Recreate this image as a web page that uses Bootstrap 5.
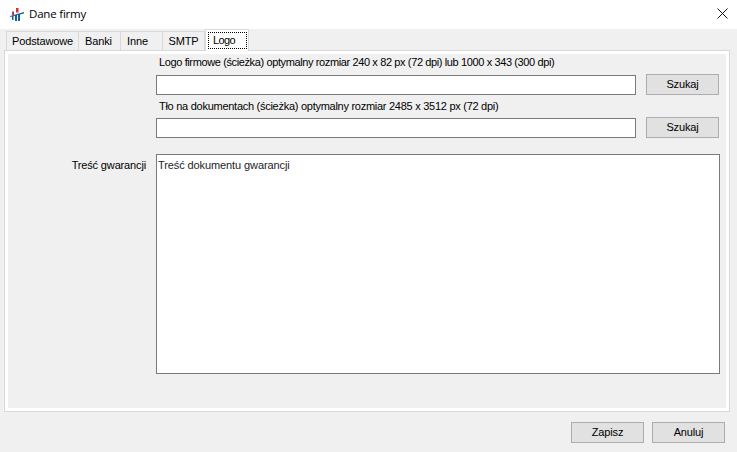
<!DOCTYPE html>
<html lang="pl">
<head>
<meta charset="utf-8">
<title>Dane firmy</title>
<link rel="stylesheet" href="https://cdn.jsdelivr.net/npm/bootstrap@5.3.0/dist/css/bootstrap.min.css">
<style>
html,body{height:452px;overflow:hidden}
body{background:#f0f0f0;color:#000;font-family:"Liberation Sans",Arial,sans-serif;font-size:11px;line-height:16px;letter-spacing:-.15px}
.title-strip{height:29px;background:#fff;padding:0 9px 0 10px}
.title-strip .app-title{font-family:"Open Sans",sans-serif;font-size:11.5px;margin-left:5px;letter-spacing:-.2px;margin-bottom:1px}
.close-x{width:11px;height:11px;margin-bottom:2px}
.tab-zone{padding:0 7px 0 4px;height:383px}
.nav.win-tabs{border:0;padding-left:2px;height:22px;align-items:flex-end;position:relative;z-index:1}
.win-tabs .nav-link{height:19px;margin:0 0 1px -1px;padding:0;color:#000;background:#f0f0f0;border:1px solid #d9d9d9;border-bottom:0;border-radius:0;text-align:center;line-height:18px}
.win-tabs .tab-a{width:73px;margin-left:0}
.win-tabs .tab-b{width:43px}
.win-tabs .tab-banki{padding-right:2px}
.win-tabs .tab-inne{padding-right:8px}
.win-tabs .nav-link.active{height:22px;width:44px;margin:0;background:#fff;color:#000;border-color:#d9d9d9;padding:2px 1px 0 2px;line-height:15px}
.dot-focus{display:block;border:1px dotted #000;height:17px;line-height:14px;text-align:left;padding-left:4px;letter-spacing:-.6px}
.tab-sheet{height:362px;border:1px solid #d9d9d9;background:#f0f0f0;box-shadow:inset 0 0 0 3px #fff;padding:3px 9px 0 3px;margin-top:-1px}
.form-area{display:grid;grid-template-columns:148px 1fr}
.hint-line{grid-column:2;height:20px;padding:0 0 0 3px;white-space:nowrap;letter-spacing:-.38px}
.hint-second{height:22px;padding-top:3px;letter-spacing:-.27px}
.path-row{grid-column:2;display:flex;gap:10px;align-items:flex-start}
.form-control.win-input{flex:none;width:480px;height:20px;margin-top:1px;padding:0 2px;border:1px solid #7a7a7a;border-radius:0;background:#fff;font-size:11px;box-shadow:none}
.btn.win-btn{flex:none;width:73px;height:21px;padding:0;background:#e1e1e1;border:1px solid #adadad;border-radius:0;color:#000;font-size:11px;line-height:19px;letter-spacing:-.15px}
.guarantee-row{grid-column:1 / 3;display:flex;margin-top:16px}
.guarantee-label{width:138px;text-align:right;padding-top:3px;white-space:nowrap}
.form-control.win-area{flex:none;margin-left:10px;width:564px;height:220px;padding:2px 2px 2px 1px;border:1px solid #7a7a7a;border-radius:0;background:#fff;font-size:11px;line-height:16px;resize:none;box-shadow:none;letter-spacing:-.1px}
.foot-bar{padding:10px 12px 0 0;gap:8px}
</style>
</head>
<body>
<div class="title-strip d-flex align-items-center justify-content-between">
  <div class="d-flex align-items-center">
    <svg width="14" height="13" viewBox="0 0 14 13" aria-hidden="true">
      <g fill="#d0313c"><rect x="2" y="3.500" width="2" height="3.500"/><rect x="6" y="0" width="2.500" height="4.500"/></g>
      <g fill="#15609f"><rect x="2" y="8" width="1.500" height="4"/><rect x="5" y="7" width="2" height="6"/><rect x="8" y="6" width="2" height="7"/><path d="M0 8 L14 4 V5.500 L0 9Z"/></g>
    </svg>
    <span class="app-title">Dane firmy</span>
  </div>
  <svg class="close-x" viewBox="0 0 11 11" aria-label="Zamknij"><path d="M.5.5l10 10M10.5.5l-10 10" stroke="#111" stroke-width="1" fill="none"/></svg>
</div>
<div class="tab-zone">
  <ul class="nav nav-tabs win-tabs">
    <li class="nav-item"><a class="nav-link tab-a" href="#">Podstawowe</a></li>
    <li class="nav-item"><a class="nav-link tab-b tab-banki" href="#">Banki</a></li>
    <li class="nav-item"><a class="nav-link tab-b tab-inne" href="#">Inne</a></li>
    <li class="nav-item"><a class="nav-link tab-b" href="#">SMTP</a></li>
    <li class="nav-item"><a class="nav-link active" href="#"><span class="dot-focus">Logo</span></a></li>
  </ul>
  <div class="tab-sheet">
    <form class="form-area">
      <div class="hint-line">Logo firmowe (ścieżka) optymalny rozmiar 240 x 82 px (72 dpi) lub 1000 x 343 (300 dpi)</div>
      <div class="path-row"><input class="form-control win-input" type="text"><button type="button" class="btn win-btn">Szukaj</button></div>
      <div class="hint-line hint-second">Tło na dokumentach (ścieżka) optymalny rozmiar 2485 x 3512 px (72 dpi)</div>
      <div class="path-row"><input class="form-control win-input" type="text"><button type="button" class="btn win-btn">Szukaj</button></div>
      <div class="guarantee-row">
        <label class="guarantee-label">Treść gwarancji</label>
        <textarea class="form-control win-area">Treść dokumentu gwarancji</textarea>
      </div>
    </form>
  </div>
</div>
<div class="foot-bar d-flex justify-content-end">
  <button type="button" class="btn win-btn">Zapisz</button>
  <button type="button" class="btn win-btn">Anuluj</button>
</div>
<script src="https://cdn.jsdelivr.net/npm/bootstrap@5.3.0/dist/js/bootstrap.bundle.min.js"></script>
</body>
</html>
